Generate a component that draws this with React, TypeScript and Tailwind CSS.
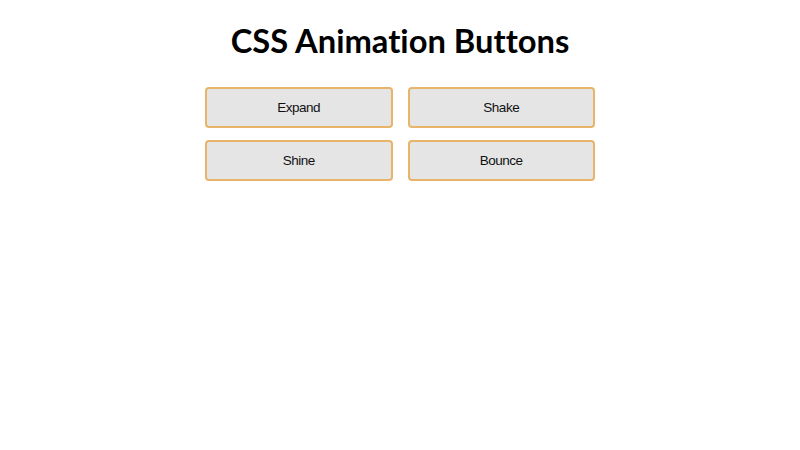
const buttons = ["Expand", "Shake", "Shine", "Bounce"];

export default function App() {
  return (
    <div className="min-h-[450px] bg-white">
      <h1 className="pt-[21px] text-center text-[32.7px] font-bold leading-[40px] text-black [font-variant-ligatures:none] [font-family:Lato,'Noto_Sans',sans-serif]">
        CSS Animation Buttons
      </h1>
      <div className="mx-auto mt-[26px] grid w-[390px] grid-cols-2 gap-x-[15px] gap-y-[12px]">
        {buttons.map((label) => (
          <button
            key={label}
            className="h-[41px] rounded-[4px] border-2 border-[#e8b46a] bg-[#e5e5e5] pt-[2px] text-[13.5px] tracking-[-0.5px] text-[#111] [font-family:'Liberation_Sans',Arial,sans-serif]"
          >
            {label}
          </button>
        ))}
      </div>
    </div>
  );
}
